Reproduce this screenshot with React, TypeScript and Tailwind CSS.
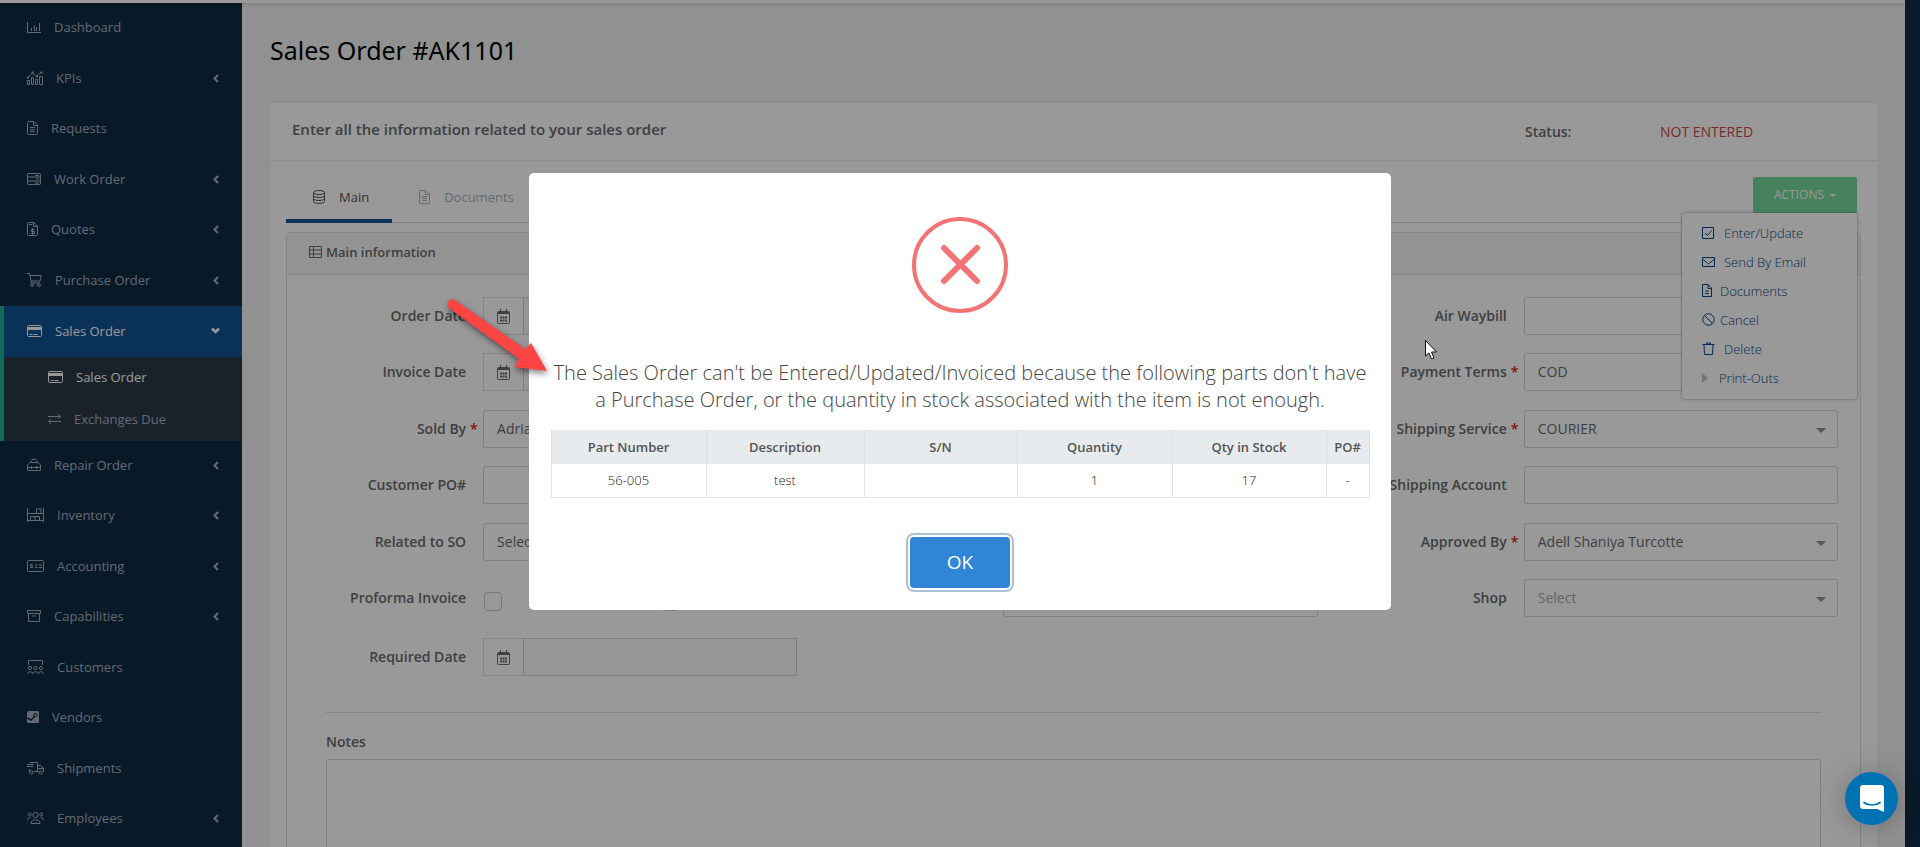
import type { ReactNode } from 'react';

const Icon = ({ w, h = 14, className = '', children }: { w: number; h?: number; className?: string; children: ReactNode }) => (
  <svg width={w} height={h} viewBox={`0 0 ${w} ${h}`} fill="none" stroke="currentColor" strokeWidth="1" className={`shrink-0 ${className}`} aria-hidden="true">
    {children}
  </svg>
);

const FileIcon = () => (
  <Icon w={11}>
    <path d="M1.5.5h5.500l3.500 3.500v8.500a1 1 0 0 1-1 1h-8a1 1 0 0 1-1-1v-11a1 1 0 0 1 1-1zM6.500.5v4h4M3 6.500h5M3 8.500h5M3 10.500h5" />
  </Icon>
);

const CardIcon = () => (
  <Icon w={15}>
    <rect x=".5" y="1.500" width="14" height="11" rx="1" />
    <path d="M1 4.500h13" strokeWidth="3" />
    <path d="M2.500 10.500h3M6.500 10.500h4" />
  </Icon>
);

const CalendarIcon = () => (
  <Icon w={13} h={15}>
    <rect x=".5" y="2.500" width="12" height="12" rx="1" />
    <path d="M1 4h11" strokeWidth="2" />
    <path d="M3.500 0v3M9.500 0v3" />
    <path d="M3 8.500h7M3 11.500h7" strokeWidth="2" strokeDasharray="2 .5" />
  </Icon>
);

const menuItems = [
  {
    label: 'Dashboard',
    icon: (
      <Icon w={14}>
        <path d="M.5 2v10.500H14M4.500 8v3M7.500 5v6M9.500 7v4M12.500 3v8" />
      </Icon>
    ),
  },
  {
    label: 'KPIs',
    arrow: true,
    icon: (
      <Icon w={16}>
        <path d="M1 6.500l4.500-4.500 4 3.500L14 1.500" />
        <path d="M.5 13.500v-4h2v4zM4.500 13.500v-7h2v7zM8.500 13.500v-5h2v5zM12.500 13.500v-8h3v8z" />
        <path d="M0 6.500h2M4.500 1.500h2M9 5.500h2M13.500 1.500h2" strokeWidth="2" />
      </Icon>
    ),
  },
  { label: 'Requests', icon: <FileIcon /> },
  {
    label: 'Work Order',
    arrow: true,
    icon: (
      <Icon w={14}>
        <rect x=".5" y="1.500" width="13" height="11" rx="1" />
        <path d="M.5 5h13M.5 9h13M8 3.500h4M9 7h3M8 11h4" />
      </Icon>
    ),
  },
  {
    label: 'Quotes',
    arrow: true,
    icon: (
      <Icon w={11}>
        <path d="M1.500.5H7l3.500 3.500v8.500a1 1 0 0 1-1 1h-8a1 1 0 0 1-1-1v-11a1 1 0 0 1 1-1zM6.500.5v4h4M2 2.500h3" />
        <path d="M7.500 7.500h-3v2h3v2h-3.500M5.500 6v7" />
      </Icon>
    ),
  },
  {
    label: 'Purchase Order',
    arrow: true,
    icon: (
      <Icon w={15}>
        <path d="M0 .5h2.500l2 9.500h8.500M3 2.500h11.500l-1.500 5.500H4.500" />
        <circle cx="5" cy="12" r="1.400" />
        <circle cx="12" cy="12" r="1.400" />
      </Icon>
    ),
  },
  { label: 'Sales Order', active: true, icon: <CardIcon /> },
  {
    label: 'Repair Order',
    arrow: true,
    icon: (
      <Icon w={14}>
        <path d="M.5 12.500V7L3 4.500h8L13.500 7v5.500zM4 4.500v-2l1-1h4l1 1v2M.5 9.500h13M4.500 8v3M9.500 8v3" />
      </Icon>
    ),
  },
  {
    label: 'Inventory',
    arrow: true,
    icon: (
      <Icon w={17}>
        <path d="M.5 0v14M16.500 0v14M.5 5.500h16M9.500 5v-4h4.500v4M.5 12.500h16M3.500 12.500v-4h9v4M8 8.500v4" />
      </Icon>
    ),
  },
  {
    label: 'Accounting',
    arrow: true,
    icon: (
      <Icon w={17}>
        <rect x=".5" y="1.500" width="16" height="11" rx="1" />
        <path d="M5.500 5.500h-2v1.500h2v1.500h-2.500M8 6h2.500M12 6h3M8 8.500h2.500M12 8.500h3" />
      </Icon>
    ),
  },
  {
    label: 'Capabilities',
    arrow: true,
    icon: (
      <Icon w={14}>
        <path d="M.5 1.500h13v3h-13zM1.500 4.500v8h11v-8M5 7h4" />
      </Icon>
    ),
  },
  {
    label: 'Customers',
    icon: (
      <Icon w={17}>
        <path d="M1.500 5V.5h14V5" />
        <circle cx="3" cy="8" r="1.600" />
        <circle cx="8.500" cy="8" r="1.600" />
        <circle cx="14" cy="8" r="1.600" />
        <path d="M.5 14c0-3 5-3 5 0c.5-3 5.500-3 6 0c0-3 5-3 5 0" />
      </Icon>
    ),
  },
  {
    label: 'Vendors',
    icon: (
      <Icon w={12}>
        <rect x="0" y="1" width="12" height="12" rx="1.500" fill="currentColor" stroke="none" />
        <path d="M0 8l4 2 4-4" stroke="#0f2a42" strokeWidth="1.500" />
        <circle cx="8.500" cy="5" r="1.700" stroke="#0f2a42" />
      </Icon>
    ),
  },
  {
    label: 'Shipments',
    icon: (
      <Icon w={17}>
        <path d="M2.500 1.500h8v9h-4M10.500 4.500h3l3 3v3h-1M2.500 8v3M0 3.500h7M0 5.500h6M10.500 7.500h6M8 10.500h3.500" />
        <circle cx="4.500" cy="11.500" r="1.600" />
        <circle cx="13.500" cy="11.500" r="1.600" />
      </Icon>
    ),
  },
  {
    label: 'Employees',
    arrow: true,
    icon: (
      <Icon w={17}>
        <circle cx="8.500" cy="4" r="2.600" />
        <circle cx="2.800" cy="3.500" r="1.500" />
        <circle cx="14.200" cy="3.500" r="1.500" />
        <path d="M4 12.500c0-5 9-5 9 0zM.5 9.500c0-2 1-3 3-3M16.500 9.500c0-2-1-3-3-3" />
      </Icon>
    ),
  },
];

const actions = [
  { label: 'Enter/Update', gap: 'gap-[10px]', icon: <Icon w={12} h={12}><path d="M.5.5h11v11H.5zM3 6l2.500 2.500L9.500 3.500" /></Icon> },
  { label: 'Send By Email', gap: 'gap-[9px]', icon: <Icon w={13} h={10}><path d="M.5.5h12v9H.5zM.5 2l6 5 6-5" /></Icon> },
  { label: 'Documents', gap: 'gap-2', icon: <Icon w={10} h={13}><path d="M.5.5H6l3.500 3.500v8.500h-9zM6 .5v4h3.500M3 7h4M3 9.500h4" /></Icon> },
  { label: 'Cancel', gap: 'gap-[5px]', icon: <Icon w={13} h={13}><circle cx="6.500" cy="6.500" r="5.700" /><path d="M2.500 2.500l8 8" /></Icon> },
  { label: 'Delete', gap: 'gap-[9px]', icon: <Icon w={13} h={13}><path d="M.5 2.500h12M2 2.500l.5 10h8l.5-10M4.500 2.500v-1.500h4v1.500" /></Icon> },
  { label: 'Print-Outs', gap: 'gap-[11px]', icon: <Icon w={6} h={10} className="text-[#c0c0c0]"><path d="M0 0l6 5-6 5z" fill="currentColor" stroke="none" /></Icon> },
];

type FieldProps = { id: string; label?: string; required?: boolean; children: ReactNode };

const Field = ({ id, label, required, children }: FieldProps) => (
  <div className="grid h-[38px] grid-cols-[173fr_314fr] items-center gap-x-[17px] mb-[18px] even:mb-[19px]">
    <label htmlFor={id} className="relative whitespace-nowrap text-right font-semibold">
      {label}
      {required && <span className="absolute left-full ml-1 text-[#e02020]">*</span>}
    </label>
    {children}
  </div>
);

const inputClass = 'h-[38px] w-full min-w-0 rounded-[2px] border border-[#d8d8d8] bg-transparent px-[13px]';

const Select = ({ id, value, muted }: { id: string; value: string; muted?: boolean }) => (
  <div className="relative">
    <select id={id} className={`${inputClass} block appearance-none ${muted ? 'text-[#a9a9a9]' : ''}`}>
      <option>{value}</option>
    </select>
    <svg width="10" height="5" className="pointer-events-none absolute right-3 top-[18px]" aria-hidden="true">
      <path d="M0 0h10L5 5z" fill="#909090" />
    </svg>
  </div>
);

const DateInput = ({ id }: { id: string }) => (
  <div className="flex h-[38px]">
    <span className="flex w-10 shrink-0 items-center justify-center border border-r-0 border-[#e2e2e2]">
      <CalendarIcon />
    </span>
    <input id={id} type="text" className="min-w-0 flex-1 border border-[#d4d4d4] bg-[#fbfbfb] px-3" />
  </div>
);

const checkboxClass = 'h-[19px] w-[18px] appearance-none rounded-[4px] border border-[#c8c8d0]';

function Sidebar() {
  return (
    <nav className="w-[242px] shrink-0 bg-[#0e2a42] text-[13px] text-[#a7b1c2]">
      <ul>
        {menuItems.map((item) =>
          item.active ? (
            <li key={item.label} className="border-l-4 border-[#19b394]">
              <a href="#" className="flex h-[51px] items-center gap-[13px] bg-[#125293] pb-[2px] pl-[23px] pr-[22px] text-white">
                {item.icon}
                {item.label}
                <Icon w={9} h={7} className="ml-auto">
                  <path d="M1 1.500l3.500 3.500L8 1.500" strokeWidth="2.500" />
                </Icon>
              </a>
              <ul className="bg-[#2b3947]">
                <li>
                  <a href="#" className="flex h-[42px] items-center gap-[13px] pb-[2px] pl-11 text-white"><CardIcon />Sales Order</a>
                </li>
                <li>
                  <a href="#" className="flex h-[42px] items-center gap-[13px] pb-[2px] pl-11">
                    <Icon w={13}>
                      <path d="M0 4.500h12M10 2l2.500 2.500L10 7M13 9.500H1M3 7L.5 9.500 3 12" />
                    </Icon>
                    Exchanges Due
                  </a>
                </li>
              </ul>
            </li>
          ) : (
            <li key={item.label} className="odd:mb-px">
              <a href="#" className="flex h-[50px] items-center gap-[13px] pb-[2px] pl-[27px] pr-[23px]">
                {item.icon}
                {item.label}
                {item.arrow && (
                  <Icon w={6} h={9} className="ml-auto">
                    <path d="M5 1L1.500 4.500 5 8" strokeWidth="2.200" />
                  </Icon>
                )}
              </a>
            </li>
          )
        )}
      </ul>
    </nav>
  );
}

function OrderForm() {
  return (
    <div className="grid grid-cols-3 px-[6px] pt-[22px]">
      <div className="pr-4">
        <Field id="orderDate" label="Order Date"><DateInput id="orderDate" /></Field>
        <Field id="invoiceDate" label="Invoice Date"><DateInput id="invoiceDate" /></Field>
        <Field id="soldBy" label="Sold By" required><Select id="soldBy" value="Adrian" /></Field>
        <Field id="customerPo" label="Customer PO#"><input id="customerPo" type="text" className={inputClass} /></Field>
        <Field id="relatedSo" label="Related to SO"><Select id="relatedSo" value="Select" /></Field>
        <Field id="proforma" label="Proforma Invoice">
          <div className="flex gap-[159px] pt-[7px] pl-px">
            <input id="proforma" type="checkbox" className={checkboxClass} />
            <input type="checkbox" aria-label="Option" className={checkboxClass} />
          </div>
        </Field>
        <div className="h-[2px]" />
        <div className="grid h-[38px] grid-cols-[173fr_314fr] items-center gap-x-[17px]">
          <label htmlFor="requiredDate" className="text-right font-semibold">Required Date</label>
          <DateInput id="requiredDate" />
        </div>
      </div>
      <div className="pr-4">
        {['a', 'b', 'c', 'd', 'e', 'f'].map((key) => (
          <Field key={key} id={`line-${key}`}>
            <input id={`line-${key}`} type="text" aria-label="Value" className={inputClass} />
          </Field>
        ))}
      </div>
      <div className="pr-4">
        <Field id="airWaybill" label="Air Waybill"><input id="airWaybill" type="text" className={inputClass} /></Field>
        <Field id="paymentTerms" label="Payment Terms" required><Select id="paymentTerms" value="COD" /></Field>
        <Field id="shippingService" label="Shipping Service" required><Select id="shippingService" value="COURIER" /></Field>
        <Field id="shippingAccount" label="Shipping Account"><input id="shippingAccount" type="text" className={inputClass} /></Field>
        <Field id="approvedBy" label="Approved By" required><Select id="approvedBy" value="Adell Shaniya Turcotte" /></Field>
        <Field id="shop" label="Shop"><Select id="shop" value="Select" muted /></Field>
      </div>
    </div>
  );
}

function StockModal() {
  return (
    <div className="fixed inset-0 z-20 flex items-start justify-center bg-black/40 pt-[173px]">
      <div role="dialog" aria-modal="true" className="flex w-[862px] max-w-full flex-col items-center rounded-[5px] bg-white px-[22px] pb-[22px] pt-11">
        <svg width="96" height="96" viewBox="0 0 96 96" fill="none" stroke="#f27474" strokeLinecap="round" aria-hidden="true">
          <circle cx="48" cy="48" r="46" strokeWidth="4" />
          <path d="M32 31l33 33M65 31L32 64" strokeWidth="6" />
        </svg>
        <h2 className="mt-[46px] text-center text-[20px] font-light leading-[27px] text-[#454545]">
          The Sales Order can't be Entered/Updated/Invoiced because the following parts don't have
          <br />a Purchase Order, or the quantity in stock associated with the item is not enough.
        </h2>
        <table className="mt-[17px] w-full table-fixed border-collapse text-center text-[13px] text-[#545454]">
          <colgroup>
            <col className="w-[155px]" />
            <col className="w-[158px]" />
            <col className="w-[153px]" />
            <col className="w-[155px]" />
            <col className="w-[154px]" />
            <col className="w-[43px]" />
          </colgroup>
          <thead className="bg-[#e7ebee]">
            <tr className="h-[34px]">
              {['Part Number', 'Description', 'S/N', 'Quantity', 'Qty in Stock', 'PO#'].map((head) => (
                <th key={head} className="border-x border-[#dddfe2] font-semibold">{head}</th>
              ))}
            </tr>
          </thead>
          <tbody>
            <tr className="h-[33px]">
              {['56-005', 'test', '', '1', '17', '-'].map((cell, i) => (
                <td key={i} className="border border-t-0 border-[#e4e5e7] font-light text-[#222222]">{cell}</td>
              ))}
            </tr>
          </tbody>
        </table>
        <button className="mt-[39px] h-[51px] w-[100px] rounded-[4px] bg-[#3085d6] text-[19px] text-white shadow-[0_0_0_2px_#fff,0_0_0_4px_rgba(50,100,150,0.4)]">
          OK
        </button>
      </div>
    </div>
  );
}

export default function App() {
  return (
    <div className="relative h-screen overflow-hidden bg-[#0e2a42] pr-[15px] font-['Open_Sans','Noto_Sans',sans-serif] text-[14px] leading-5 text-[#676a6c]">
      <header className="relative z-10 h-[3px] bg-white shadow-[0_1px_4px_rgba(0,0,0,0.2)]" />
      <div className="flex min-h-full">
        <Sidebar />
        <main className="min-w-0 flex-1 bg-[#f2f2f2] px-7">
          <h1 className="flex h-[99px] items-start pt-[29px] font-['Noto_Sans',sans-serif] text-[25px] leading-9 text-black">Sales Order #AK1101</h1>

          <section className="border-t border-[#e7eaec] bg-white">
            <div className="flex h-[58px] items-start border-b border-[#e7eaec] pl-[22px] pt-4">
              <h2 className="text-[15px] font-semibold">Enter all the information related to your sales order</h2>
              <div className="ml-auto flex pt-[3px]">
                <span className="w-[135px] font-semibold">Status:</span>
                <span className="w-[217px] text-[#c94848]">NOT ENTERED</span>
              </div>
            </div>

            <div className="px-4">
              <div className="flex h-[62px] border-b border-[#dddddd] pr-1 text-[13px]">
                <a href="#" className="-mb-px flex items-center gap-[14px] border-b-4 border-[#125293] pl-[27px] pr-[23px] pt-[14px] text-[#555555]">
                  <Icon w={12}>
                    <ellipse cx="6" cy="2.500" rx="5.500" ry="2" />
                    <path d="M.5 2.500v9c0 2.600 11 2.600 11 0v-9M.5 5.500c0 2.600 11 2.600 11 0M.5 8.500c0 2.600 11 2.600 11 0" />
                  </Icon>
                  Main
                </a>
                <a href="#" className="flex items-center gap-[14px] pl-[27px] pt-[11px] text-[#a7b1c2]"><FileIcon />Documents</a>
                <div className="relative ml-auto mt-4">
                  <button className="flex h-9 w-[104px] items-center justify-center gap-[6px] rounded-t-[2px] bg-[#75d99c] text-[12px] text-white">
                    ACTIONS
                    <svg width="6" height="3" aria-hidden="true"><path d="M0 0h6L3 3z" fill="currentColor" /></svg>
                  </button>
                  <ul className="absolute right-0 top-9 z-10 h-[186px] w-[175px] rounded-[3px] bg-white pt-[5px] text-[13px] font-light text-[#0d4580] shadow-[0_0_3px_rgba(86,96,117,0.7)]">
                    {actions.map((action) => (
                      <li key={action.label}>
                        <a href="#" className={`flex h-[29px] items-center pl-5 ${action.gap}`}>
                          {action.icon}
                          {action.label}
                        </a>
                      </li>
                    ))}
                  </ul>
                </div>
              </div>

              <div className="mt-[9px] rounded-t-[4px] border border-[#dddddd] pb-10">
                <div className="flex h-[42px] items-center gap-1 rounded-t-[4px] border-b border-[#dddddd] bg-[#f5f5f5] pb-[3px] pl-[22px]">
                  <Icon w={13} h={12}>
                    <path d="M.5.5h12v11H.5zM.5 4h12M.5 8h12M4.500.5v11" />
                  </Icon>
                  <h3 className="text-[13px] font-semibold">Main information</h3>
                </div>
                <OrderForm />
                <div className="mx-[39px] mt-9 border-t border-[#e2e2e2] pt-[19px]">
                  <label htmlFor="notes" className="block font-semibold">Notes</label>
                  <textarea id="notes" className="mt-[7px] block h-[200px] w-full resize-none rounded-[2px] border border-[#d8d8d8] p-3" />
                </div>
              </div>
            </div>
          </section>
        </main>
      </div>

      <StockModal />

      {/* Pointer arrow and mouse cursor */}
      <svg width="108" height="86" viewBox="0 0 108 86" className="absolute left-[445px] top-[296px] z-30 drop-shadow-[1px_3px_3px_rgba(0,0,0,0.5)]" aria-hidden="true">
        <path d="M10 4l70 49 6-6 16 28-33-4 5-8L4 12C0 7 5 1 10 4z" fill="#ff4444" />
      </svg>
      <svg width="14" height="21" viewBox="0 0 14 21" className="absolute left-[1425px] top-[340px] z-30" aria-hidden="true">
        <path d="M.5.5v15.500l3.500-3 2.500 6 2.500-1-2.500-6h5z" fill="#fff" stroke="#111" />
      </svg>

      <button aria-label="Open chat" className="fixed bottom-[22px] right-[22px] z-30 flex h-[53px] w-[53px] items-center justify-center rounded-full bg-[#0071b2] shadow-[0_2px_28px_rgba(0,0,0,0.25)]">
        <svg width="24" height="27" viewBox="0 0 24 27" aria-hidden="true">
          <path d="M3 0h18a3 3 0 0 1 3 3v24l-7-3H3a3 3 0 0 1-3-3V3a3 3 0 0 1 3-3z" fill="#fff" />
          <path d="M4 17.500c4 3.300 12 3.300 16 0" fill="none" stroke="#0071b2" strokeWidth="1.700" strokeLinecap="round" />
        </svg>
      </button>
    </div>
  );
}
